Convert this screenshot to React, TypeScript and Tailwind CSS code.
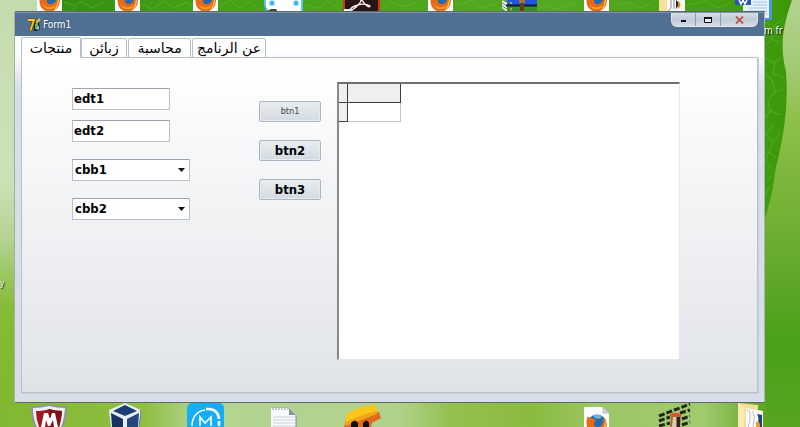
import React, { useState } from "react";

const tabs = [
  { title: "منتجات", width: "w-[60px]" },
  { title: "زبائن", width: "w-[46px]" },
  { title: "محاسبة", width: "w-[63px]" },
  { title: "عن الرنامج", width: "w-[74px]" },
];

const Wallpaper = () => (
  <svg className="absolute inset-0 h-full w-full" viewBox="0 0 800 427" preserveAspectRatio="none" aria-hidden="true">
    <defs>
      <linearGradient id="leftSide" x1="0" y1="0" x2="0" y2="1">
        <stop offset="0" stopColor="#c3dcae" />
        <stop offset="0.42" stopColor="#cbe2b6" />
        <stop offset="0.56" stopColor="#b3d394" />
        <stop offset="0.72" stopColor="#86bb36" />
        <stop offset="1" stopColor="#80b52e" />
      </linearGradient>
      <linearGradient id="rightSide" x1="0" y1="0" x2="0" y2="1">
        <stop offset="0" stopColor="#b2d28e" />
        <stop offset="0.15" stopColor="#a5cb77" />
        <stop offset="0.28" stopColor="#8fc04a" />
        <stop offset="0.42" stopColor="#7cb63a" />
        <stop offset="0.6" stopColor="#66ab2c" />
        <stop offset="0.8" stopColor="#4ba019" />
        <stop offset="1" stopColor="#58a51f" />
      </linearGradient>
      <linearGradient id="ground" x1="0" y1="0" x2="1" y2="0">
        <stop offset="0" stopColor="#82b730" />
        <stop offset="0.19" stopColor="#8fbf42" />
        <stop offset="0.26" stopColor="#b4d493" />
        <stop offset="0.52" stopColor="#b0d18b" />
        <stop offset="0.59" stopColor="#94c04f" />
        <stop offset="0.69" stopColor="#8aba3e" />
        <stop offset="0.78" stopColor="#9cc765" />
        <stop offset="0.92" stopColor="#a2ca6e" />
        <stop offset="1" stopColor="#58a51f" />
      </linearGradient>
      <linearGradient id="leaf" x1="0" y1="0" x2="1" y2="0">
        <stop offset="0" stopColor="#2f8c12" />
        <stop offset="0.2" stopColor="#44a013" />
        <stop offset="0.7" stopColor="#56a922" />
        <stop offset="1" stopColor="#3b9909" />
      </linearGradient>
    </defs>
    <rect width="400" height="427" fill="url(#leftSide)" />
    <rect x="400" width="400" height="427" fill="url(#rightSide)" />
    <rect y="396" width="766" height="31" fill="url(#ground)" />
    <path d="M37 0H792C782 28 780 48 786 72C789 112 782 142 775 172C773 192 768 208 764 222H700V14H37Z" fill="url(#leaf)" />
    <g fill="none" stroke="#6cb536" strokeWidth="1" opacity="0.6">
      <path d="M64 2l10 4 8-5 9 7 12-6M70 12l7-5M142 4l10 5 12-8 9 7 14-6 8 9M220 7l10-7 9 8 12-7 8 9M305 5l14 3 8-7 12 8M382 9l9-7 14 5 12-6M458 6l13-6 12 8 15-5M543 4l14 5 18-7M612 8l14-6 15 6 14-7M690 5l15-4 13 7 14-6" />
      <path d="M766 45l6-6 8 4M765 58l8 5 8-5M766 75l6 5 3 12 9-3M775 92l-7 8 2 11 11 4M770 111l-5 8M774 125l-9 9 8 8 7-8M773 142l-4 10 7 6M769 152l-4 9 6 7M766 180l6-4M766 195l3-9M775 63l-2 10 10 5M772 39l2-14 9-5M770 25l-6-4" />
    </g>
  </svg>
);

const FirefoxDoc = ({ className }: { className: string }) => (
  <svg className={`absolute ${className}`} width="26" height="34" viewBox="0 0 26 34" aria-hidden="true">
    <path d="M0 0H19L25 6V34H0Z" fill="#fbfcfd" />
    <path d="M19 0V6H25Z" fill="#cfd6de" stroke="#9aa5b0" strokeWidth="0.6" />
    <circle cx="13" cy="17" r="9.5" fill="#2369ae" />
    <path d="M9 9q5-3 9 1l-3 2-4-1z" fill="#6fb6df" />
    <path d="M4 9C5 11 6 11 8 11L12 13L10 16C9 19 13 22 17 19C20 17 20 12 18 9C23 12 24 19 21 23C17 29 8 29 4 23C2 19 2 13 4 9Z" fill="#e66a18" />
    <path d="M5 19C8 24 14 25 19 21C16 27 8 27 5 19Z" fill="#f6a628" />
    <path d="M21 13C23 18 21 24 17 26C20 22 21 18 21 13Z" fill="#f9cd40" />
  </svg>
);

const TopIcons = () => (
  <>
    <FirefoxDoc className="left-[37px] -top-4" />
    <FirefoxDoc className="left-[115px] -top-4" />
    <FirefoxDoc className="left-[193px] -top-4" />
    <FirefoxDoc className="left-[428px] -top-4" />
    <FirefoxDoc className="left-[584px] -top-4" />
    <svg className="absolute left-[264px] top-0" width="40" height="12" viewBox="0 0 40 12" aria-hidden="true">
      <path d="M0 0H39V12H3Q0 8 0 0Z" fill="#fff" />
      <path d="M1 0V7L4 12M38 0V12" fill="none" stroke="#28b4ee" strokeWidth="1.5" />
      <circle cx="8" cy="3" r="2.6" fill="#42b8ee" />
      <circle cx="32" cy="3" r="2.6" fill="#42b8ee" />
      <path d="M3 11L7 9H12L14 12H3Z" fill="#34454f" />
    </svg>
    <svg className="absolute left-[343px] top-0" width="37" height="12" viewBox="0 0 37 12" aria-hidden="true">
      <path d="M0 0H37V12H0Z" fill="#d8301c" />
      <path d="M2 0H35V11H2Z" fill="#291416" />
      <path d="M18 0C18 4 12 8 9 10C6 11 7 8 12 6C18 3 25 4 27 6C27 8 22 6 19 0" fill="none" stroke="#f4f1ee" strokeWidth="1.4" />
      <path d="M1 12V9H8L10 12Z" fill="#e7eef3" />
    </svg>
    <svg className="absolute left-[502px] top-0" width="36" height="12" viewBox="0 0 36 12" aria-hidden="true">
      <path d="M0 0L5 3V12L0 8Z" fill="#eef1ee" />
      <path d="M0 3L5 6M0 6L5 9" stroke="#6d7a80" />
      <path d="M5 0H35V5H6Z" fill="#1f55e0" />
      <path d="M5 6H35V12H5Z" fill="#37901f" />
      <path d="M4 5.5H35" stroke="#111c33" strokeWidth="2" />
      <path d="M8 3H10M8 9H10" stroke="#b4a944" strokeWidth="2" />
      <path d="M18 0H22V12H18Z" fill="#6a3a1c" />
      <path d="M17 0H23V3H17Z" fill="#a9713a" />
    </svg>
    <svg className="absolute left-[659px] top-0" width="27" height="12" viewBox="0 0 27 12" aria-hidden="true">
      <path d="M0 0H9V12H0Z" fill="#f5e19b" />
      <path d="M8 0H26V12H8Z" fill="#f8f8f6" />
      <path d="M12 0V8L9 11M15 0V9" stroke="#8d939c" fill="none" />
      <path d="M17 0Q22 3 17 9Z" fill="#23262d" />
      <path d="M19 1Q24 4 19 9Z" fill="#e58a24" />
    </svg>
    <svg className="absolute left-[735px] top-0" width="38" height="20" viewBox="0 0 38 20" aria-hidden="true">
      <path d="M8 0H36V19H8Z" fill="#e9f3fd" />
      <path d="M34 0H37V20H28V18H34Z" fill="#4698e4" />
      <path d="M18 2H32M18 5H32M14 8H32M12 11H32M12 14H32" stroke="#9fc3ea" />
      <path d="M0 0H16V5H0Z" fill="#2a55b0" />
      <path d="M4 0L6 4L8 0L10 4L12 0" stroke="#fff" strokeWidth="1.5" fill="none" />
    </svg>
  </>
);

const BottomIcons = () => (
  <>
    <svg className="absolute bottom-0 left-[30px]" width="38" height="23" viewBox="0 0 38 23" aria-hidden="true">
      <path d="M1 2Q10 3 19 0Q28 3 37 2Q37 15 33 23H5Q1 15 1 2Z" fill="#8f959b" />
      <path d="M3 4Q12 4 19 2Q26 4 35 4Q34 16 31 23H7Q3 15 3 4Z" fill="#eff0f1" />
      <path d="M6 7Q14 7 19 5Q25 7 32 7Q31 17 29 23H9Q6 15 6 7Z" fill="#9d1c22" />
      <path d="M19 5Q25 7 32 7Q31 17 29 23H19Z" fill="#7d1218" />
      <path d="M11 23L14 9H18L20 15L22 9H25L28 23H24L23 16L20 22H18L16 16L15 23Z" fill="#fff" />
    </svg>
    <svg className="absolute bottom-0 left-[109px]" width="33" height="24" viewBox="0 0 33 24" aria-hidden="true">
      <path d="M0 7L16 0L32 7L30 24H2Z" fill="#e9eef5" />
      <path d="M4 8L16 2L28 8L16 13Z" fill="#1c3f73" />
      <path d="M2 10L14 16V24H3Z" fill="#16335f" />
      <path d="M30 10L18 16V24H29Z" fill="#21477e" />
      <path d="M31 7L32 10L30 24" stroke="#6b7f98" fill="none" />
    </svg>
    <svg className="absolute bottom-0 left-[187px]" width="37" height="24" viewBox="0 0 37 24" aria-hidden="true">
      <rect width="37" height="34" rx="5" fill="#15adf5" />
      <path d="M5 23C5 14 10 8 18 7" fill="none" stroke="#fff" strokeWidth="1.5" />
      <path d="M19 6Q31 5 32 16M32 18V23" fill="none" stroke="#fff" strokeWidth="2.5" />
      <path d="M13 23V14L18 20L24 14V23" fill="none" stroke="#fff" strokeWidth="1.6" />
    </svg>
    <svg className="absolute bottom-0 left-[271px]" width="27" height="20" viewBox="0 0 27 20" aria-hidden="true">
      <path d="M0 1H18L25 8V20H0Z" fill="#f8fafb" />
      <path d="M18 1V8H25Z" fill="#8a959e" />
      <path d="M2 10H24M2 13H24M2 16H24M2 19H24" stroke="#c7d2dc" />
      <path d="M2 0V3M5 0V3M8 0V3M11 0V3M14 0V3M17 0V3" stroke="#8e999f" />
      <path d="M25 8V20" stroke="#7f8b90" />
    </svg>
    <svg className="absolute bottom-0 left-[343px]" width="39" height="24" viewBox="0 0 39 24" aria-hidden="true">
      <path d="M1 24L3 19L36 9L38 15L29 20L28 24Z" fill="#e06a1e" />
      <path d="M2 18L34 6V11L3 23Z" fill="#f2a51b" />
      <path d="M3 12Q10 5 29 2L32 1L35 8Q22 10 3 19Z" fill="#f8c81a" />
      <path d="M8 24V20Q12 15 15 20V24ZM20 24V20Q24 15 26 20V24Z" fill="#101010" />
    </svg>
    <FirefoxDoc className="-bottom-3.5 left-[584px]" />
    <svg className="absolute bottom-0 left-[658px]" width="34" height="24" viewBox="0 0 34 24" aria-hidden="true">
      <path d="M1 13L32 1M1 18L12 14M1 23L12 20M22 10L32 7M24 16L32 13M24 22L32 19" stroke="#23261c" strokeWidth="3" strokeDasharray="6 2" />
      <path d="M13 12H23L22 24H12Z" fill="#ba6240" />
      <path d="M15 14H18V24H14Z" fill="#d9ceb0" />
      <path d="M19 14H22V24H19Z" fill="#26252a" />
      <path d="M11 13L14 10H21L24 13Z" fill="#e1512c" />
    </svg>
    <svg className="absolute bottom-0 left-[738px]" width="27" height="24" viewBox="0 0 27 24" aria-hidden="true">
      <path d="M0 0L20 2V8L9 24H0Z" fill="#f4dd91" />
      <path d="M8 5L25 8V24H8Z" fill="#fafafa" />
      <path d="M9 6Q15 10 10 24M14 8Q18 12 15 24" stroke="#b8bec4" fill="none" />
      <path d="M19 11Q22 15 19 24H24V12Z" fill="#1c4470" />
      <path d="M18 19Q22 17 22 24H18Z" fill="#e6a02b" />
      <path d="M0 0L7 4L6 24H0Z" fill="#f8e9b2" />
    </svg>
  </>
);

const DelphiLogo = () => (
  <svg width="14" height="14" viewBox="0 0 14 14" aria-hidden="true">
    <path d="M6 4L9 3L12 4L13 11L11 13H7Z" fill="#1d2b2c" />
    <path d="M8 6L11 5V9L8 11Z" fill="#5fae4e" />
    <path d="M9 10L12 8V11L10 12Z" fill="#9ecbe8" />
    <path d="M1 2H7L3.5 13" fill="none" stroke="#5b3c08" strokeWidth="3" />
    <path d="M1 2H7L3.5 12.5" fill="none" stroke="#f8ca1b" strokeWidth="1.8" />
    <path d="M9 5L13 1" stroke="#f4ce2a" strokeWidth="1.8" />
  </svg>
);

const TitleBar = () => (
  <header className="flex h-6 items-start justify-between border-t border-[#7d93ac] bg-[#507194] pr-1.5">
    <div className="flex h-full items-center gap-0.5 pl-3">
      <DelphiLogo />
      <h1 className="text-[10px] leading-3 text-white [text-shadow:0_0_3px_#2c445f]">Form1</h1>
    </div>
    <div className="flex h-3.5 overflow-hidden rounded-b-md border border-t-0 border-[#dfe6ee] bg-linear-to-b from-[#d5dde7] via-[#c0cbd8] to-[#d3dbe5]">
      <button aria-label="Minimize" className="flex w-6 items-center justify-center border-r border-[#8c9db2]">
        <svg width="7" height="8" viewBox="0 0 7 8"><path d="M1 4H6V6H1Z" fill="#111" /></svg>
      </button>
      <button aria-label="Maximize" className="flex w-[25px] items-center justify-center border-r border-[#8c9db2]">
        <svg width="8" height="6" viewBox="0 0 8 6"><path d="M0.5 0.5H7.5V5.5H0.5Z" fill="#e8edf2" stroke="#111" /><path d="M0 1H8" stroke="#111" strokeWidth="2" /></svg>
      </button>
      <button aria-label="Close" className="flex w-9 items-center justify-center">
        <svg width="9" height="8" viewBox="0 0 9 8"><path d="M1 0.5L8 7.5M8 0.5L1 7.5" stroke="#b9564c" strokeWidth="1.8" /></svg>
      </button>
    </div>
  </header>
);

const fieldStyle = "h-[22px] border border-[#b9c1cb] border-t-[#9aa5b3] bg-white text-[13px] leading-4 font-bold text-black outline-none";

const ComboBox = ({ name }: { name: string }) => (
  <div className="relative flex w-[118px]">
    <select aria-label={name} defaultValue={name} className={`${fieldStyle} w-full appearance-none rounded-none pl-0.5`}>
      <option>{name}</option>
    </select>
    <svg className="pointer-events-none absolute top-[9px] right-[5px]" width="7" height="4" viewBox="0 0 7 4" aria-hidden="true">
      <path d="M0 0H7L3.5 4Z" fill="#111" />
    </svg>
  </div>
);

const buttonStyle = "flex h-[21px] w-[62px] items-center justify-center rounded-xs border border-[#aab6c4] bg-linear-to-b from-[#e9edf0] to-[#d2dae1] shadow-[inset_0_0_0_1px_#e6ebf0]";

const DataGrid = () => (
  <div className="min-w-0 flex-1 border-t-2 border-r border-b border-l-2 border-t-[#707070] border-r-[#e6e6e6] border-b-[#e6e6e6] border-l-[#8a8a8a] bg-white">
    <table className="w-[62px] table-fixed border-separate border-spacing-0" aria-label="Data">
      <thead>
        <tr className="h-[19px]">
          <th className="w-[9px] border-r border-b border-[#3b3b38] bg-[#efefef] p-0" />
          <th className="border-r border-b border-[#3b3b38] bg-[#efefef] p-0" />
        </tr>
      </thead>
      <tbody>
        <tr className="h-[19px]">
          <td className="border-r border-b border-[#3b3b38] bg-[#efefef] p-0" />
          <td className="border-r border-b border-[#c3c5cc] p-0" />
        </tr>
      </tbody>
    </table>
  </div>
);

const App = () => {
  const [active, setActive] = useState(0);

  return (
    <div className="relative flex min-h-screen flex-col overflow-hidden pt-3 pr-[35px] pb-[25px] pl-[15px] font-['DejaVu_Sans_Condensed','DejaVu_Sans',sans-serif]">
      <Wallpaper />
      <TopIcons />
      <BottomIcons />
      <span className="absolute top-[25px] left-[764px] text-[10px] leading-3 whitespace-nowrap text-white [text-shadow:1px_1px_1px_#000]">m fr</span>
      <span className="absolute top-[278px] left-0 text-[8px] leading-3 text-white [text-shadow:1px_1px_1px_#000]">y</span>

      <main className="relative flex flex-1 flex-col border-r border-[#a9b3bd] bg-linear-to-b from-white from-10% to-[#d8dee7] to-20% shadow-[0_1px_0_#5f6b68,0_-1px_0_#5f6b68,-1px_0_0_#a3b09f]">
        <TitleBar />
        <div className="flex flex-1 flex-col px-1.5 pt-px pb-[9px]">
          <div role="tablist" className="relative -mb-px flex h-[21px] items-end font-['DejaVu_Sans',sans-serif] text-[14px] leading-4 text-black">
            {tabs.map((tab, i) => (
              <button
                key={tab.title}
                role="tab"
                dir="rtl"
                aria-selected={active === i}
                onClick={() => setActive(i)}
                className={`flex items-center justify-center rounded-t-xs border border-[#b4bfcd] bg-white whitespace-nowrap ${tab.width} ${
                  active === i ? "h-[21px] border-b-white" : "mr-px h-5"
                }`}
              >
                {tab.title}
              </button>
            ))}
          </div>
          <section role="tabpanel" className="flex flex-1 gap-4 border border-[#b8c1cf] bg-linear-to-b from-white via-[#f0f1f3] to-[#dfe3e8] pt-6 pr-[77px] pb-8 pl-[50px] shadow-[1px_1px_0_#c9d0db]">
            <div className="mr-[53px] flex flex-col gap-[17px] pt-1.5">
              <div className="flex flex-col gap-2.5">
                <input aria-label="edt1" defaultValue="edt1" className={`${fieldStyle} w-[98px] px-px pb-0.5`} />
                <input aria-label="edt2" defaultValue="edt2" className={`${fieldStyle} w-[98px] px-px pb-0.5`} />
              </div>
              <ComboBox name="cbb1" />
              <ComboBox name="cbb2" />
            </div>
            <div className="flex flex-col gap-[18px] pt-[19px]">
              <button className={`${buttonStyle} text-[9px] text-[#444]`}>btn1</button>
              <button className={`${buttonStyle} text-[13px] font-bold text-black`}>btn2</button>
              <button className={`${buttonStyle} text-[13px] font-bold text-black`}>btn3</button>
            </div>
            <DataGrid />
          </section>
        </div>
      </main>
    </div>
  );
};

export default App;
